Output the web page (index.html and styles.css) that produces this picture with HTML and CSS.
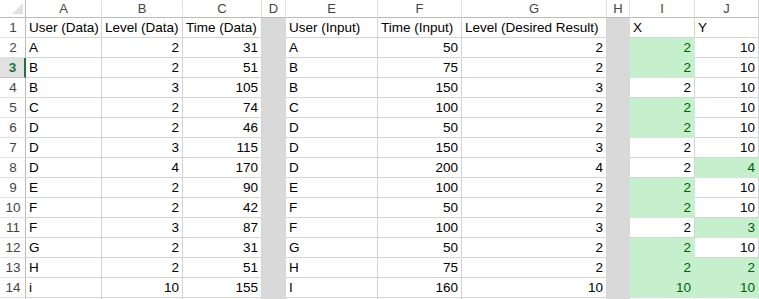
FILE: index.html
```html
<!DOCTYPE html>
<html>
<head>
<meta charset="utf-8">
<link rel="stylesheet" href="styles.css">
</head>
<body>
<div class="sheet">
  <div class="ch corner"><span class="tri"></span></div>
  <div class="ch">A</div><div class="ch">B</div><div class="ch">C</div><div class="ch">D</div><div class="ch">E</div><div class="ch">F</div><div class="ch">G</div><div class="ch">H</div><div class="ch">I</div><div class="ch last">J</div>

  <div class="rh">1</div><div class="c">User (Data)</div><div class="c">Level (Data)</div><div class="c">Time (Data)</div><div class="c gray"></div><div class="c">User (Input)</div><div class="c">Time (Input)</div><div class="c">Level (Desired Result)</div><div class="c gray"></div><div class="c">X</div><div class="c">Y</div>

  <div class="rh">2</div><div class="c">A</div><div class="c n">2</div><div class="c n">31</div><div class="c gray"></div><div class="c">A</div><div class="c n">50</div><div class="c n">2</div><div class="c gray"></div><div class="c n good">2</div><div class="c n">10</div>

  <div class="rh sel">3</div><div class="c">B</div><div class="c n">2</div><div class="c n">51</div><div class="c gray"></div><div class="c">B</div><div class="c n">75</div><div class="c n">2</div><div class="c gray"></div><div class="c n good">2</div><div class="c n">10</div>

  <div class="rh">4</div><div class="c">B</div><div class="c n">3</div><div class="c n">105</div><div class="c gray"></div><div class="c">B</div><div class="c n">150</div><div class="c n">3</div><div class="c gray"></div><div class="c n">2</div><div class="c n">10</div>

  <div class="rh">5</div><div class="c">C</div><div class="c n">2</div><div class="c n">74</div><div class="c gray"></div><div class="c">C</div><div class="c n">100</div><div class="c n">2</div><div class="c gray"></div><div class="c n good">2</div><div class="c n">10</div>

  <div class="rh">6</div><div class="c">D</div><div class="c n">2</div><div class="c n">46</div><div class="c gray"></div><div class="c">D</div><div class="c n">50</div><div class="c n">2</div><div class="c gray"></div><div class="c n good">2</div><div class="c n">10</div>

  <div class="rh">7</div><div class="c">D</div><div class="c n">3</div><div class="c n">115</div><div class="c gray"></div><div class="c">D</div><div class="c n">150</div><div class="c n">3</div><div class="c gray"></div><div class="c n">2</div><div class="c n">10</div>

  <div class="rh">8</div><div class="c">D</div><div class="c n">4</div><div class="c n">170</div><div class="c gray"></div><div class="c">D</div><div class="c n">200</div><div class="c n">4</div><div class="c gray"></div><div class="c n">2</div><div class="c n good">4</div>

  <div class="rh">9</div><div class="c">E</div><div class="c n">2</div><div class="c n">90</div><div class="c gray"></div><div class="c">E</div><div class="c n">100</div><div class="c n">2</div><div class="c gray"></div><div class="c n good">2</div><div class="c n">10</div>

  <div class="rh">10</div><div class="c">F</div><div class="c n">2</div><div class="c n">42</div><div class="c gray"></div><div class="c">F</div><div class="c n">50</div><div class="c n">2</div><div class="c gray"></div><div class="c n good">2</div><div class="c n">10</div>

  <div class="rh">11</div><div class="c">F</div><div class="c n">3</div><div class="c n">87</div><div class="c gray"></div><div class="c">F</div><div class="c n">100</div><div class="c n">3</div><div class="c gray"></div><div class="c n">2</div><div class="c n good">3</div>

  <div class="rh">12</div><div class="c">G</div><div class="c n">2</div><div class="c n">31</div><div class="c gray"></div><div class="c">G</div><div class="c n">50</div><div class="c n">2</div><div class="c gray"></div><div class="c n good">2</div><div class="c n">10</div>

  <div class="rh">13</div><div class="c">H</div><div class="c n">2</div><div class="c n">51</div><div class="c gray"></div><div class="c">H</div><div class="c n">75</div><div class="c n">2</div><div class="c gray"></div><div class="c n good">2</div><div class="c n good">2</div>

  <div class="rh">14</div><div class="c">i</div><div class="c n">10</div><div class="c n">155</div><div class="c gray"></div><div class="c">I</div><div class="c n">160</div><div class="c n">10</div><div class="c gray"></div><div class="c n good">10</div><div class="c n good">10</div>

  <div class="rh stub"></div><div class="c stub"></div><div class="c stub"></div><div class="c stub"></div><div class="c gray stub"></div><div class="c stub"></div><div class="c stub"></div><div class="c stub"></div><div class="c gray stub"></div><div class="c stub"></div><div class="c stub"></div>
</div>
</body>
</html>
```
FILE: styles.css
```css
html, body {
  margin: 0;
  padding: 0;
  background: #ffffff;
  overflow: hidden;
}
.sheet {
  display: grid;
  grid-template-columns: 26px 76px 81px 79px 24px 92px 84px 145px 23px 65px 64px;
  grid-template-rows: 18px repeat(14, 20px) 1px;
  font-family: "Liberation Sans", Arial, sans-serif;
  font-size: 13.5px;
  color: #000;
  width: 759px;
  height: 299px;
  overflow: hidden;
}
.ch {
  box-sizing: border-box;
  border-right: 1px solid #e1e1e1;
  border-bottom: 1px solid #bcbcbc;
  color: #444;
  font-size: 13px;
  text-align: center;
  line-height: 17px;
  background: #fff;
}
.ch.corner {
  border-right: 1px solid #bcbcbc;
  position: relative;
}
.ch.last {
  border-right: 1px solid #d4d4d4;
}
.tri {
  position: absolute;
  right: 2px;
  bottom: 3px;
  width: 0;
  height: 0;
  border-left: 11px solid transparent;
  border-bottom: 11px solid #dfdfdf;
}
.rh {
  box-sizing: border-box;
  border-right: 1px solid #bcbcbc;
  border-bottom: 1px solid #e1e1e1;
  color: #444;
  font-size: 13.5px;
  text-align: center;
  line-height: 19px;
  padding-left: 1px;
  background: #fff;
}
.rh.sel {
  background: #e1e1e1;
  color: #217346;
  font-weight: bold;
  border-right: 2px solid #217346;
  border-bottom-color: #c6c6c6;
}
.c {
  box-sizing: border-box;
  border-right: 1px solid #d4d4d4;
  border-bottom: 1px solid #d4d4d4;
  line-height: 19px;
  padding: 0 3px 0 3px;
  white-space: nowrap;
  overflow: hidden;
}
.c.n {
  text-align: right;
  padding-right: 3px;
}
.c.gray {
  background: #d9d9d9;
  border-color: #d9d9d9;
}
.c.good {
  background: #c6efce;
  border-color: #c6efce;
  color: #006100;
}
.stub {
  border-bottom: 0;
}
```
